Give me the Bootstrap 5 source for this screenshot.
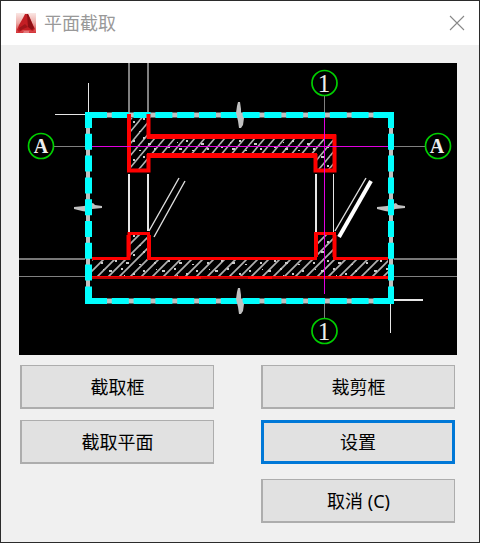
<!DOCTYPE html>
<html lang="zh-CN">
<head>
<meta charset="utf-8">
<meta name="viewport" content="width=device-width, initial-scale=1">
<title>平面截取</title>
<link href="https://cdn.jsdelivr.net/npm/bootstrap@5.3.0/dist/css/bootstrap.min.css" rel="stylesheet">
<style>
body { font-family: "Noto Sans", "Noto Sans CJK SC", sans-serif; font-size: 18px; line-height: 24px; background: #f0f0f0; color: #000; }
.dialog-window { border: 1px solid #2b2b2b; background: #f0f0f0; }
.title-bar { height: 44px; padding: 0 14px 0 15px; background: #fff; }
.title-text { font-size: 18px; line-height: 24px; color: #999; }
.close-btn { width: 16px; height: 16px; }
.dialog-body { padding: 18px 22px 19px 18px; }
.command-grid { grid-template-columns: 1fr 1fr; gap: 11px 47px; margin: 10px 2px 0 1px; }
.command-btn { --bs-btn-font-size: 18px; --bs-btn-line-height: 24px; --bs-btn-bg: #e1e1e1; --bs-btn-color: #000;
  --bs-btn-hover-bg: #e5f1fb; --bs-btn-hover-color: #000; --bs-btn-hover-border-color: #0078d7;
  height: 44px; padding: 0; border: solid #adadad; border-width: 1px 1px 2px 2px; }
.command-default { border: 3px solid #0078d7; }
.command-cancel { grid-column: 2; margin-top: 4px; }
</style>
</head>
<body>
<main class="dialog-window min-vh-100">
  <header class="title-bar d-flex align-items-center">
    <svg class="me-2 flex-shrink-0" width="20" height="20" viewBox="0 0 20 20" aria-hidden="true">
      <defs><linearGradient id="logoBg" x2="0" y2="1"><stop stop-color="#fae7e4"/><stop offset=".5" stop-color="#eda9a5"/><stop offset="1" stop-color="#d33136"/></linearGradient></defs>
      <path fill="url(#logoBg)" d="M0 0h20v20H0z"/>
      <path fill="#c31e24" d="M9 1h3l2 4 3 7 2 4-2 2-4-1H7l-4 2-2-2 2-5 4-7z"/>
      <path fill="#8c1015" d="M11 1h1l6 14-2 2-4-3z"/>
      <path fill="#9e151a" d="M3 15l6-4 3 3-5 2-3 2z"/>
      <path fill="#e4777a" d="M8 18h5v2H7z"/>
    </svg>
    <h1 class="title-text fw-normal mb-0 me-auto">平面截取</h1>
    <button type="button" class="close-btn btn p-0 border-0 d-flex align-items-center justify-content-center" aria-label="关闭">
      <svg width="16" height="16" viewBox="0 0 16 16" aria-hidden="true"><path d="M1 1l14 14M15 1L1 15" stroke="#888" stroke-width="1.1"/></svg>
    </button>
  </header>
  <div class="dialog-body">
    <svg class="d-block w-100" viewBox="19 63 438 292" role="img" aria-label="平面截取示意图">
      <defs>
        <pattern id="hatchA" width="10" height="12" patternUnits="userSpaceOnUse">
          <path d="M-10 12L0 0M-5 18L15 -6M0 24L20 0" stroke="#b0b0b0" stroke-width="1.6"/>
        </pattern>
        <pattern id="hatchB" width="11" height="11" patternUnits="userSpaceOnUse">
          <path d="M-3 14L14 -3M-3 3L3 -3M8 14L14 8" stroke="#b0b0b0" stroke-width="1.7"/>
        </pattern>
        <pattern id="speckles" width="53" height="19" patternUnits="userSpaceOnUse">
          <path d="M3 4h3v2H3zM9 13h2v2H9zM15 2h2v2h-2zM20 15h3v2h-3zM27 7h2v2h-2zM33 17h2v1h-2zM37 4h2v2h-2zM42 10h3v2h-3zM48 15h2v2h-2zM50 3h1v1h-1zM18 9h1v1h-1z" fill="#ccc"/>
        </pattern>
        <path id="breakMark" d="M238 102h2l1 7v5l3 4-1 7-2 3h-2l-1-7-2-8 1-7z" fill="#c0c0c0"/>
        <path id="sideMark" d="M74 207l10-1 9-3 2 2 7 1v2l-10 1-4 3-6-1-8-2z" fill="#c0c0c0"/>
      </defs>
      <path d="M19 63h438v292H19z"/>
      <g fill="none">
        <path d="M129 63v50M148 63v50" stroke="#808080" stroke-width="2"/>
        <path d="M54 146.500h31M394 146.500h31M324.500 96v17M324.500 298v20M19 276.500h66M394 276.500h63" stroke="#808080"/>
        <path d="M19 259h66M394 259h63" stroke="#777" stroke-width="2"/>
        <path d="M88.500 83v29M55 114.500h31M390.500 304v29" stroke="#e6e6e6"/>
        <path d="M394 300h29M129 174v58M148 174v57M316 174v58" stroke="#e6e6e6" stroke-width="2"/>
        <path d="M333.500 174v58" stroke="#e6e6e6"/>
        <path d="M129 118h19v18h186v34h-18v-14H148v14h-19z" fill="url(#hatchA)"/>
        <path d="M129 118h19v18h186v34h-18v-14H148v14h-19z" fill="url(#speckles)"/>
        <path d="M92 259h37v-25h20v25h167v-25h18v25h54v18H92z" fill="url(#hatchB)"/>
        <path d="M92 259h37v-25h20v25h167v-25h18v25h54v18H92z" fill="url(#speckles)"/>
      </g>
      <g fill="none" stroke="#c0c0c0">
        <path d="M88 115h303M88 301h303" stroke-width="5"/>
        <path d="M88 115v186M391 115v186" stroke-width="4"/>
      </g>
      <use href="#sideMark"/><use href="#sideMark" x="303"/>
      <g fill="none" stroke="#0ff">
        <path d="M90 115h301M90 301h301" stroke-width="6" stroke-dasharray="17 4.800"/>
        <path d="M88.500 112v192" stroke-width="7" stroke-dasharray="16 5.800"/>
        <path d="M391 112v192" stroke-width="6" stroke-dasharray="16 5.800"/>
        <path d="M85 115h10M85 301h10M386 115h6" stroke-width="6"/>
        <path d="M88.500 296v8M391 296v8" stroke-width="6"/>
      </g>
      <use href="#breakMark"/><use href="#breakMark" y="186"/>
      <g fill="none" stroke="#f00">
        <path d="M129 114v56.500h19.500V156H315.500v14.500h19V136.500H148.500V114" stroke-width="4"/>
        <path d="M147 136.500h189M147 155.500h170" stroke-width="5"/>
        <path d="M92 258.500h37v-25h19.500v25h167v-25h19v25H388M92 277.500h296" stroke-width="3"/>
        <path d="M128.500 235v22M149 235v22M316 235v22M334.500 235v22" stroke-width="4"/>
        <path d="M92 278h87M201 278h47M272 278h75" stroke="#c00000" stroke-width="2"/>
      </g>
      <path d="M92 146.500h296M324.500 118v176" fill="none" stroke="#e000e0"/>
      <g fill="none" stroke="#ddd" stroke-width="1.400">
        <path d="M179 178L149 231M185 181L154 237M366 178L335 231"/>
        <path d="M371 181L339 237" stroke="#fff" stroke-width="4"/>
      </g>
      <g fill="none" stroke="#00cf00" stroke-width="1.700">
        <circle cx="41" cy="146" r="12.500"/><circle cx="438" cy="146" r="12.500"/>
        <circle cx="324.500" cy="83" r="12.500"/><circle cx="324.500" cy="331" r="12.500"/>
      </g>
      <g fill="#eee" text-anchor="middle" font-family="Liberation Serif, serif">
        <g font-size="20" font-weight="bold"><text x="41" y="153">A</text><text x="437" y="153">A</text></g>
        <g font-size="25"><text x="324" y="92">1</text><text x="324" y="340">1</text></g>
      </g>
    </svg>
    <div class="command-grid d-grid">
      <button type="button" class="btn command-btn rounded-0">截取框</button>
      <button type="button" class="btn command-btn rounded-0">裁剪框</button>
      <button type="button" class="btn command-btn rounded-0">截取平面</button>
      <button type="button" class="btn command-btn command-default rounded-0">设置</button>
      <button type="button" class="btn command-btn command-cancel rounded-0">取消 (C)</button>
    </div>
  </div>
</main>
<script src="https://cdn.jsdelivr.net/npm/bootstrap@5.3.0/dist/js/bootstrap.bundle.min.js"></script>
</body>
</html>
